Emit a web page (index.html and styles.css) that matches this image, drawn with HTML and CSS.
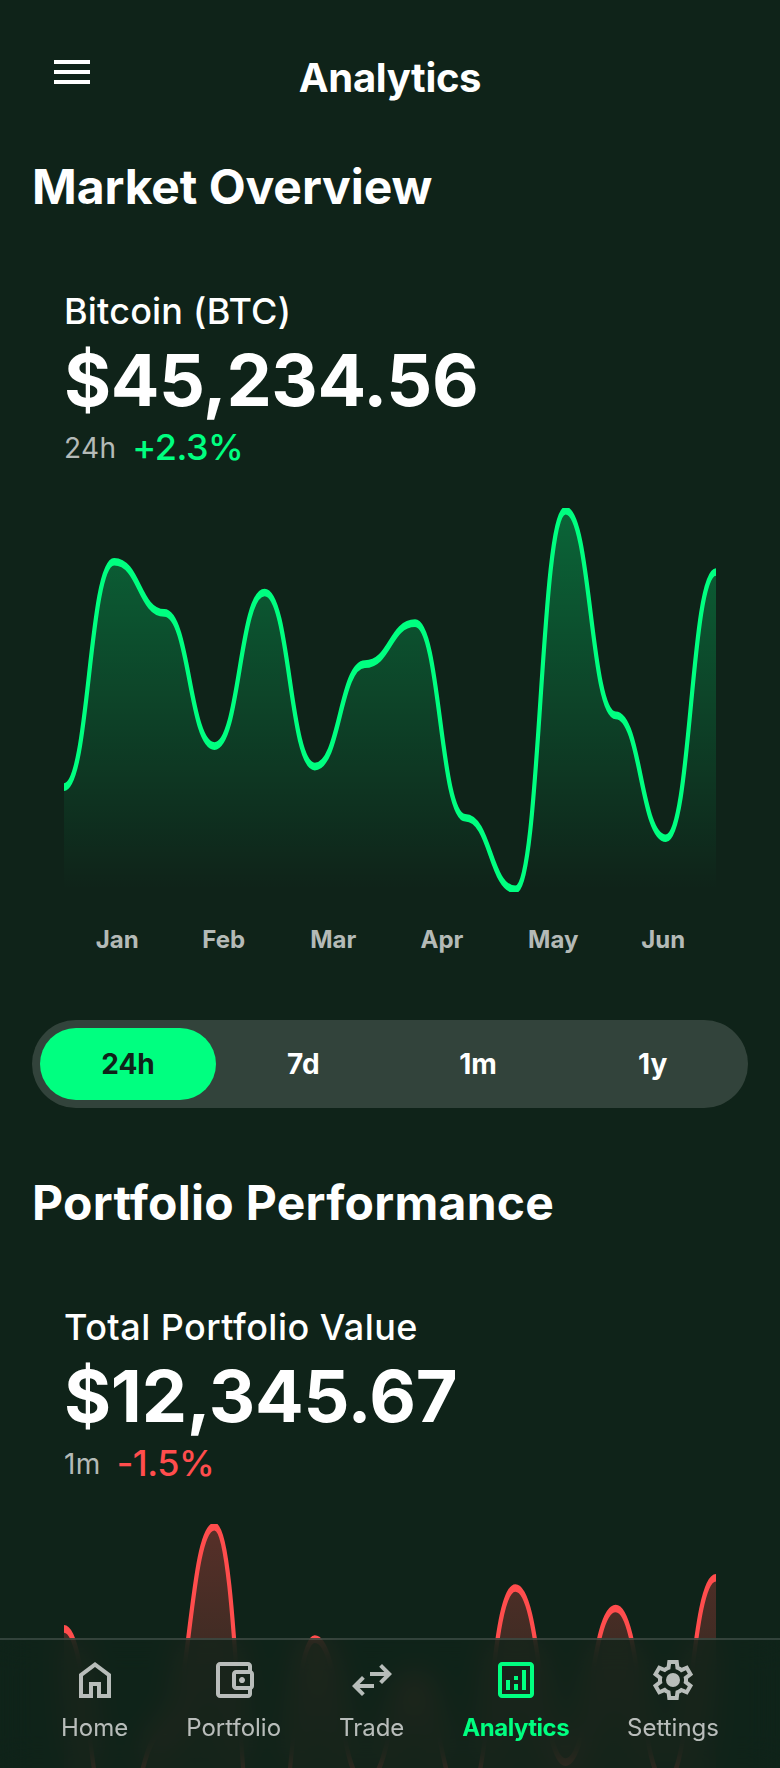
FILE: index.html
```html
<!DOCTYPE html>
<html lang="en">
<head>
<meta charset="utf-8">
<title>Analytics</title>
<link rel="stylesheet" href="styles.css">
</head>
<body>
<div class="app">
  <header class="header">
    <button class="menu" aria-label="Menu">
      <svg class="icon" viewBox="0 0 24 24"><path d="M3 18h18v-2H3v2zm0-5h18v-2H3v2zm0-7v2h18V6H3z"/></svg>
    </button>
    <h1 class="title">Analytics</h1>
    <span class="header-spacer"></span>
  </header>

  <main>
    <h2 class="heading">Market Overview</h2>
    <section class="card market">
      <p class="asset">Bitcoin (BTC)</p>
      <p class="price">$45,234.56</p>
      <div class="change"><span class="period">24h</span><span class="delta up">+2.3%</span></div>
      <svg class="chart" viewBox="0 0 472 150" preserveAspectRatio="none">
        <defs><linearGradient id="fill-up" x1="236" y1="1" x2="236" y2="149" gradientUnits="userSpaceOnUse"><stop stop-color="#00ff80" stop-opacity=".3"/><stop offset="1" stop-color="#00ff80" stop-opacity="0"/></linearGradient></defs>
        <path fill="url(#fill-up)" d="M0 109C18.15 109 18.15 21 36.31 21S54.46 41 72.62 41S90.77 93 108.92 93S127.08 33 145.23 33S163.38 101 181.54 101S199.69 61 217.85 61S236 45 254.15 45S272.31 121 290.46 121S308.62 149 326.77 149S344.92 1 363.08 1S381.23 81 399.38 81S417.54 129 435.69 129S453.85 25 472 25V149H0Z"/>
        <path class="line up-line" d="M0 109C18.15 109 18.15 21 36.31 21S54.46 41 72.62 41S90.77 93 108.92 93S127.08 33 145.23 33S163.38 101 181.54 101S199.69 61 217.85 61S236 45 254.15 45S272.31 121 290.46 121S308.62 149 326.77 149S344.92 1 363.08 1S381.23 81 399.38 81S417.54 129 435.69 129S453.85 25 472 25"/>
      </svg>
      <div class="months"><span>Jan</span><span>Feb</span><span>Mar</span><span>Apr</span><span>May</span><span>Jun</span></div>
    </section>
    <div class="ranges">
      <span class="range selected">24h</span><span class="range">7d</span><span class="range">1m</span><span class="range">1y</span>
    </div>

    <h2 class="heading performance">Portfolio Performance</h2>
    <section class="card holdings">
      <p class="asset">Total Portfolio Value</p>
      <p class="price">$12,345.67</p>
      <div class="change"><span class="period">1m</span><span class="delta down">-1.5%</span></div>
      <svg class="chart" viewBox="0 0 472 150" preserveAspectRatio="none">
        <defs><linearGradient id="fill-down" x1="236" y1="1" x2="236" y2="149" gradientUnits="userSpaceOnUse"><stop stop-color="#ff4d4d" stop-opacity=".3"/><stop offset="1" stop-color="#ff4d4d" stop-opacity="0"/></linearGradient></defs>
        <path fill="url(#fill-down)" d="M0 41C18.15 41 18.15 121 36.31 121S54.46 81 72.62 81S90.77 1 108.92 1S127.08 149 145.23 149S163.38 45 181.54 45S199.69 101 217.85 101S236 61 254.15 61S272.31 109 290.46 109S308.62 25 326.77 25S344.92 93 363.08 93S381.23 33 399.38 33S417.54 101 435.69 101S453.85 21 472 21V149H0Z"/>
        <path class="line down-line" d="M0 41C18.15 41 18.15 121 36.31 121S54.46 81 72.62 81S90.77 1 108.92 1S127.08 149 145.23 149S163.38 45 181.54 45S199.69 101 217.85 101S236 61 254.15 61S272.31 109 290.46 109S308.62 25 326.77 25S344.92 93 363.08 93S381.23 33 399.38 33S417.54 101 435.69 101S453.85 21 472 21"/>
      </svg>
    </section>
  </main>
</div>

<nav class="nav">
  <a class="nav-item">
    <svg class="icon" viewBox="0 -960 960 960"><path d="M240-200h120v-240h240v240h120v-360L480-740 240-560v360Zm-80 80v-480l320-240 320 240v480H520v-240h-80v240H160Z"/></svg>
    <span>Home</span>
  </a>
  <a class="nav-item">
    <svg class="icon" viewBox="0 -960 960 960"><path d="M200-120q-33 0-56.500-23.500T120-200v-560q0-33 23.500-56.500T200-840h560q33 0 56.500 23.500T840-760v100h-80v-100H200v560h560v-100h80v100q0 33-23.500 56.500T760-120H200Zm320-160q-33 0-56.500-23.500T440-360v-240q0-33 23.500-56.500T520-680h280q33 0 56.500 23.500T880-600v240q0 33-23.500 56.500T800-280H520Zm280-80v-240H520v240h280Zm-160-60q25 0 42.500-17.500T700-480q0-25-17.500-42.500T640-540q-25 0-42.500 17.500T580-480q0 25 17.500 42.500T640-420Z"/></svg>
    <span>Portfolio</span>
  </a>
  <a class="nav-item">
    <svg class="icon" viewBox="0 -960 960 960"><path d="M280-160 80-360l200-200 56 57-103 103h287v80H233l103 103-56 57Zm400-240-56-57 103-103H440v-80h287L624-743l56-57 200 200-200 200Z"/></svg>
    <span>Trade</span>
  </a>
  <a class="nav-item active">
    <svg class="icon" viewBox="0 -960 960 960"><path d="M280-280h80v-200h-80v200Zm320 0h80v-400h-80v400Zm-160 0h80v-120h-80v120Zm0-200h80v-80h-80v80ZM200-120q-33 0-56.500-23.500T120-200v-560q0-33 23.500-56.500T200-840h560q33 0 56.500 23.500T840-760v560q0 33-23.500 56.500T760-120H200Zm0-80h560v-560H200v560Z"/></svg>
    <span>Analytics</span>
  </a>
  <a class="nav-item">
    <svg class="icon" viewBox="0 -960 960 960"><path d="m370-80-16-128q-13-5-24.500-12T307-235l-119 50L78-375l103-78q-1-7-1-13.500v-27q0-6.500 1-13.500L78-585l110-190 119 50q11-8 23-15t24-12l16-128h220l16 128q13 5 24.500 12t22.500 15l119-50 110 190-103 78q1 7 1 13.500v27q0 6.500-2 13.500l103 78-110 190-118-50q-11 8-23 15t-24 12L590-80H370Zm70-80h79l14-106q31-8 57.500-23.500T639-327l99 41 39-68-86-65q5-14 7-29.500t2-31.500q0-16-2-31.500t-7-29.500l86-65-39-68-99 42q-22-23-48.500-38.500T533-694l-13-106h-79l-14 106q-31 8-57.500 23.500T321-633l-99-41-39 68 86 64q-5 15-7 30t-2 32q0 16 2 31t7 30l-86 65 39 68 99-42q22 23 48.500 38.500T427-266l13 106Z"/><circle cx="480" cy="-480" r="140"/></svg>
    <span>Settings</span>
  </a>
</nav>
</body>
</html>
```
FILE: styles.css
```css
* { box-sizing: border-box; margin: 0; padding: 0; }
html, body { height: 1768px; overflow: hidden; }
body {
  background: #0f2319;
  color: #fff;
  font-family: Inter, "Liberation Sans", sans-serif;
}
.app { height: 1768px; overflow: hidden; }
.icon { display: block; width: 48px; height: 48px; fill: currentColor; }

.header { display: flex; align-items: flex-start; height: 154px; padding: 48px 32px 0; }
.menu { width: 96px; padding-left: 16px; border: 0; background: none; color: inherit; }
.title { flex: 1; padding-top: 2px; font-size: 40px; line-height: 56px; font-weight: 700; text-align: center; letter-spacing: -0.35px; }
.header-spacer { width: 96px; }

.heading { height: 98px; padding: 1px 32px 0; font-size: 48px; line-height: 64px; font-weight: 700; letter-spacing: -0.08px; }
.performance { letter-spacing: 0.27px; }
.card { margin: 0 32px; padding: 32px; }
.asset { font-size: 36px; line-height: 54px; height: 56px; font-weight: 500; }
.market .asset { letter-spacing: 0.19px; }
.holdings .asset { letter-spacing: 0.46px; }
.price { font-size: 72px; line-height: 80px; font-weight: 700; }
.market .price { letter-spacing: -0.45px; }
.holdings .price { letter-spacing: -0.28px; }
.change { display: flex; align-items: center; gap: 16px; height: 56px; }
.period { font-size: 28px; line-height: 40px; letter-spacing: 0.35px; color: rgba(255, 255, 255, .7); }
.delta { font-size: 36px; line-height: 54px; height: 56px; font-weight: 500; letter-spacing: -0.5px; }
.up { color: #00ff80; }
.down { color: #ff4d4d; }
.chart { display: block; width: 100%; height: 384px; margin-top: 32px; }
.line { fill: none; stroke-width: 3; stroke-linecap: round; }
.up-line { stroke: #00ff80; }
.down-line { stroke: #ff4d4d; }
.months { display: grid; grid-template-columns: 106.6px 106.2px 113px 104.4px 118.2px 101.8px; margin-top: 32px; font-size: 24px; line-height: 32px; font-weight: 700; text-align: center; color: rgba(255, 255, 255, .7); }

.ranges { display: flex; height: 88px; margin: 32px 32px 62px; padding: 8px; border-radius: 44px; background: rgba(255, 255, 255, .15); }
.range { flex: 1; border-radius: 36px; font-size: 28px; line-height: 72px; font-weight: 700; text-align: center; }
.selected { flex: 0 0 176px; background: #00ff80; color: #0f2319; }

.nav {
  position: fixed; left: 0; right: 0; bottom: 0;
  display: flex; justify-content: space-around;
  height: 130px; padding: 16px 32px 24px;
  border-top: 2px solid rgba(255, 255, 255, .15);
  background: rgba(15, 35, 25, .8);
  backdrop-filter: blur(16px);
}
.nav-item { display: flex; flex-direction: column; align-items: center; gap: 8px; font-size: 24px; line-height: 32px; color: rgba(255, 255, 255, .7); }
.active { color: #00ff80; font-weight: 700; letter-spacing: -0.5px; }
```
